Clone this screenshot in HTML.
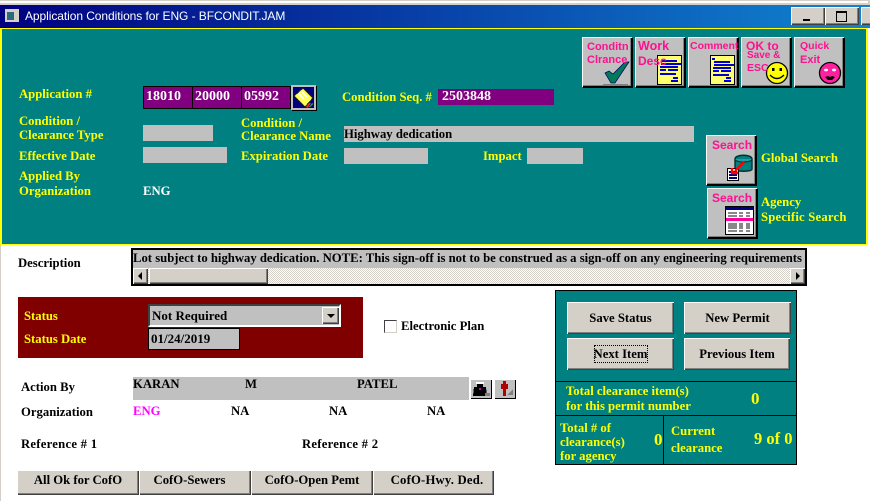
<!DOCTYPE html>
<html><head><meta charset="utf-8">
<style>
html,body{margin:0;padding:0;background:#fff}
#r{position:relative;width:870px;height:501px;overflow:hidden;background:#fff;font:bold 12.7px "Liberation Serif",serif;color:#000}
#r div,#r svg{position:absolute}
.t{white-space:nowrap;line-height:14px}
.y{color:#ff0}
.g{background:#c0c0c0}
.b{box-sizing:border-box;background:#d4d0c8;box-shadow:inset 1px 1px 0 #fff,inset -1px -1px 0 #404040,inset -2px -2px 0 #808080;text-align:center;white-space:nowrap}
.ib{width:50px;height:50px;background:#c0c0c0;box-shadow:inset 1px 1px 0 #fff,inset -1px -1px 0 #000,inset -2px -2px 0 #808080,1px 1px 0 #000}
.m{color:#ff1090;font:bold 12px "Liberation Sans",sans-serif;white-space:nowrap;line-height:12px}
.f{background:#800080;color:#fff;border:1px solid #000;box-sizing:border-box;font-size:14px;line-height:20px;padding-left:2px}
</style></head><body><div id="r">
<!-- chrome -->
<div style="left:0;top:0;width:870px;height:5px;background:#d4d0c8"></div>
<div style="left:0;top:1px;width:870px;height:2px;background:#fff"></div>
<div style="left:0;top:5px;width:870px;height:23px;background:linear-gradient(90deg,#000080,#1084d0)"></div>
<div style="left:5px;top:9px;width:14px;height:13px;background:#d4d0c8"></div>
<div style="left:7px;top:12px;width:7px;height:8px;background:#2a6a80"></div>
<div class="t" style="left:25px;top:9px;color:#fff;font:12px/14px 'Liberation Sans',sans-serif;letter-spacing:-.07px">Application Conditions for ENG - BFCONDIT.JAM</div>
<div class="b" style="left:791px;top:7px;width:34px;height:18px"></div>
<div style="left:803px;top:19px;width:7px;height:2px;background:#000"></div>
<div class="b" style="left:825px;top:7px;width:34px;height:18px"></div>
<div style="left:836px;top:11px;width:9px;height:8px;border:1px solid #000;border-top-width:2px"></div>
<div class="b" style="left:861px;top:7px;width:20px;height:18px"></div>
<div style="left:0;top:245px;width:1px;height:256px;background:#d4d0c8"></div>
<!-- teal -->
<div style="left:0;top:28px;width:868px;height:217px;box-sizing:border-box;background:#008080;border:2px solid #ff0;border-width:1px 2px 1px 2px"></div>
<div style="left:866px;top:28px;width:2px;height:217px;background:#ff0"></div>
<div style="left:868px;top:0;width:2px;height:5px;background:#d4d0c8"></div>

<div class="t y" style="left:19px;top:87px">Application #</div>
<div class="f" style="left:143px;top:86px;width:50px;height:23px">18010</div>
<div class="f" style="left:192px;top:86px;width:50px;height:23px">20000</div>
<div class="f" style="left:241px;top:86px;width:50px;height:23px">05992</div>
<div style="left:291px;top:85px;width:25px;height:25px;background:#000080;box-sizing:border-box;border:2px solid #c0c0c0;box-shadow:1px 1px 0 #000"></div>
<svg style="left:293px;top:87px" width="22" height="22" viewBox="0 0 22 22" shape-rendering="crispEdges"><polygon points="1,9 10,1 20,11 12,20" fill="#ffff50" stroke="#222"/><path d="M6 7l5 5M9 5l5 5" stroke="#fff" stroke-width="2"/><path d="M13 20l3-4h2l-3 5z" fill="#e03020"/><path d="M16 20l3-4 1 1-3 3z" fill="#20a040"/></svg>
<div class="t y" style="left:342px;top:90px">Condition Seq. #</div>
<div style="left:438px;top:89px;width:116px;height:16px;background:#800080;color:#fff;line-height:16px;padding-left:4px;box-sizing:border-box;font-size:14px">2503848</div>

<div class="t y" style="left:19px;top:114px">Condition /</div>
<div class="t y" style="left:19px;top:128px">Clearance Type</div>
<div class="g" style="left:143px;top:125px;width:70px;height:16px"></div>
<div class="t y" style="left:241px;top:116px">Condition /</div>
<div class="t y" style="left:241px;top:129px">Clearance Name</div>
<div class="g t" style="left:344px;top:126px;width:350px;height:16px;line-height:16px">Highway dedication</div>
<div class="t y" style="left:19px;top:149px">Effective Date</div>
<div class="g" style="left:143px;top:147px;width:84px;height:16px"></div>
<div class="t y" style="left:241px;top:149px">Expiration Date</div>
<div class="g" style="left:344px;top:148px;width:84px;height:16px"></div>
<div class="t y" style="left:483px;top:149px">Impact</div>
<div class="g" style="left:527px;top:148px;width:56px;height:16px"></div>
<div class="t y" style="left:19px;top:169px">Applied By</div>
<div class="t y" style="left:19px;top:184px">Organization</div>
<div class="t" style="left:143px;top:184px;color:#fff">ENG</div>

<!-- top icon buttons -->
<div class="ib" style="left:582px;top:37px">
<svg style="left:20px;top:20px" width="28" height="28" viewBox="0 0 28 28"><path d="M1 27.5h25" stroke="#808080" fill="none"/><polygon points="3,16 7,14 11,17 23,5 27,5 13,26 9,26" fill="#007a5a" stroke="#000060" stroke-width=".7"/></svg>
<div class="m" style="left:5px;top:4px;font-size:11px">Conditn</div><div class="m" style="left:5px;top:17px;font-size:11px">Clrance</div></div>
<div class="ib" style="left:635px;top:37px">
<svg style="left:22px;top:18px" width="25" height="30" viewBox="0 0 25 30" shape-rendering="crispEdges"><rect x=".5" y=".5" width="24" height="29" fill="#ffff70" stroke="#000"/><path d="M4 6h16M4 9h20M3 12h18M3 15h6M11 15h10M3 19h16M16 23h5M14 26h7" stroke="#0000d0" stroke-width="2"/></svg>
<div class="m" style="left:3px;top:3px;font-size:12.5px">Work</div><div class="m" style="left:3px;top:18px">Desc</div></div>
<div class="ib" style="left:688px;top:37px">
<svg style="left:22px;top:18px" width="25" height="30" viewBox="0 0 25 30" shape-rendering="crispEdges"><rect x=".5" y=".5" width="24" height="29" fill="#ffff70" stroke="#000"/><path d="M2 4h3M4 7h16M4 10h20M3 13h18M3 16h6M11 16h10M3 20h16M16 23h5M14 26h7" stroke="#0000d0" stroke-width="2"/></svg>
<div class="m" style="left:2px;top:3px;font-size:10.5px">Comment</div></div>
<div class="ib" style="left:741px;top:37px">
<svg style="left:24px;top:24px" width="24" height="24" viewBox="0 0 24 24"><circle cx="12" cy="12" r="10.5" fill="#ff0" stroke="#000" stroke-width="1.3"/><rect x="7" y="7" width="2.5" height="3"/><rect x="14.5" y="7" width="2.5" height="3"/><path d="M5 14q7 7 14 0" fill="none" stroke="#000" stroke-width="1.3"/></svg>
<div class="m" style="left:5px;top:3px">OK to</div><div class="m" style="left:6px;top:13px;font-size:10px">Save &amp;</div><div class="m" style="left:6px;top:25px;font-size:10.5px">ESC</div></div>
<div class="ib" style="left:794px;top:37px">
<svg style="left:24px;top:24px" width="24" height="24" viewBox="0 0 24 24"><circle cx="12" cy="12" r="10.5" fill="#ff20a0" stroke="#000" stroke-width="1.3"/><ellipse cx="8" cy="9" rx="2" ry="1.4" fill="#fff"/><ellipse cx="16" cy="9" rx="2" ry="1.4" fill="#fff"/><path d="M7 16l3-1 2 1 2-1 3 1-3 3h-4z"/></svg>
<div class="m" style="left:6px;top:3px;font-size:10.5px">Quick</div><div class="m" style="left:6px;top:17px;font-size:11px">Exit</div></div>

<!-- search buttons -->
<div class="ib" style="left:706px;top:135px"><div class="m" style="left:6px;top:4px">Search</div>
<svg style="left:20px;top:18px" width="28" height="28" viewBox="0 0 28 28"><path d="M9 6c0-5 17-5 17 0v10c0 3-17 3-17 0z" fill="#008080" stroke="#003030" stroke-width="1.4"/><path d="M9 6c0 4 17 4 17 0" fill="#20a0a0" stroke="#003030"/><rect x="1.5" y="15.5" width="11" height="12" fill="#fff" stroke="#000"/><path d="M3 19h8M3 22h8M3 25h8" stroke="#000080" stroke-width="2"/><path d="M18 9L9 18M6 15v5h6" fill="none" stroke="#f00" stroke-width="2.4"/></svg></div>
<div class="ib" style="left:707px;top:188px"><div class="m" style="left:5px;top:4px">Search</div>
<svg style="left:18px;top:18px" width="29" height="29" viewBox="0 0 29 29" shape-rendering="crispEdges"><rect x=".5" y=".5" width="28" height="28" fill="#fff" stroke="#000"/><rect x="1" y="1" width="27" height="3" fill="#000080"/><path d="M3 7h9M3 10h9M3 18h9M3 20h9M3 22h9M3 25h9M14 7h4M21 7h4M14 10h4M21 10h4M14 18h4M21 18h4M14 20h4M21 20h4M14 22h4M21 22h4M14 25h4M21 25h4" stroke="#111"/><rect x="1" y="12" width="27" height="3" fill="#ff00a0"/></svg></div>
<div class="t y" style="left:761px;top:151px">Global Search</div>
<div class="t y" style="left:761px;top:195px">Agency</div>
<div class="t y" style="left:761px;top:210px;letter-spacing:.2px">Specific Search</div>

<!-- description -->
<div class="t" style="left:18px;top:256px">Description</div>
<div style="left:131px;top:248px;width:676px;height:38px;box-sizing:border-box;border:2px solid #000;background:#c0c0c0"></div>
<div class="t" style="left:133px;top:251px;width:672px;overflow:hidden">Lot subject to highway dedication. NOTE: This sign-off is not to be construed as a sign-off on any engineering requirements</div>
<div style="left:133px;top:268px;width:672px;height:16px;background:repeating-conic-gradient(#d4d0c8 0 25%,#fff 0 50%) 0 0/2px 2px"></div>
<div class="b" style="left:133px;top:268px;width:15px;height:16px"></div>
<div style="left:138px;top:272px;width:0;height:0;border:4px solid transparent;border-right-color:#000;border-left-width:0"></div>
<div class="b" style="left:149px;top:268px;width:119px;height:16px"></div>
<div class="b" style="left:790px;top:268px;width:15px;height:16px"></div>
<div style="left:796px;top:272px;width:0;height:0;border:4px solid transparent;border-left-color:#000;border-right-width:0"></div>

<!-- status -->
<div style="left:18px;top:297px;width:345px;height:61px;background:#800000"></div>
<div class="t y" style="left:24px;top:309px">Status</div>
<div class="t y" style="left:24px;top:332px">Status Date</div>
<div style="left:148px;top:304px;width:193px;height:23px;box-sizing:border-box;background:#c0c0c0;border:2px solid;border-color:#404040 #fff #fff #404040;line-height:20px;padding-left:2px;font-size:13px">Not Required</div>
<div class="b" style="left:322px;top:307px;width:17px;height:17px"></div>
<div style="left:327px;top:314px;width:0;height:0;border:4px solid transparent;border-top-color:#000;border-bottom-width:0"></div>
<div style="left:148px;top:328px;width:92px;height:22px;box-sizing:border-box;background:#c0c0c0;border:1px solid #000;line-height:19px;padding-left:2px;font-size:13px">01/24/2019</div>
<div style="left:384px;top:320px;width:11px;height:11px;background:#fff;border:1px solid;border-color:#404040 #d4d0c8 #d4d0c8 #404040"></div>
<div class="t" style="left:401px;top:319px">Electronic Plan</div>

<!-- action -->
<div class="t" style="left:21px;top:380px">Action By</div>
<div class="g" style="left:133px;top:377px;width:336px;height:23px"></div>
<div class="t" style="left:133px;top:377px">KARAN</div>
<div class="t" style="left:245px;top:377px">M</div>
<div class="t" style="left:357px;top:377px">PATEL</div>
<div class="b" style="left:470px;top:379px;width:22px;height:20px;background:#c0c0c0;box-shadow:inset 1px 1px 0 #fff,inset -1px -1px 0 #000"></div>
<svg style="left:471px;top:380px" width="20" height="18" viewBox="0 0 20 18" shape-rendering="crispEdges"><path d="M5 2h8v2h-1v3h3l1 9H2l1-9h3V4H5z"/><rect x="5" y="2" width="8" height="2" fill="#fff"/><rect x="8" y="8" width="2" height="2" fill="#c000c0"/><path d="M14 13h5v3h-5z" fill="#808080"/></svg>
<div class="b" style="left:494px;top:379px;width:22px;height:20px;background:#c0c0c0;box-shadow:inset 1px 1px 0 #fff,inset -1px -1px 0 #000"></div>
<svg style="left:495px;top:380px" width="20" height="18" viewBox="0 0 20 18" shape-rendering="crispEdges"><path d="M8 1h3v3h2v5h-2v7H8V9H6V4h2z" fill="#b00000"/><path d="M12 15l6-6v6z" fill="#808080"/></svg>
<div class="t" style="left:21px;top:405px">Organization</div>
<div class="t" style="left:133px;top:404px;color:#f0f">ENG</div>
<div class="t" style="left:231px;top:404px">NA</div>
<div class="t" style="left:329px;top:404px">NA</div>
<div class="t" style="left:427px;top:404px">NA</div>
<div class="t" style="left:21px;top:437px;letter-spacing:.25px">Reference # 1</div>
<div class="t" style="left:302px;top:437px;letter-spacing:.25px">Reference # 2</div>

<div class="b" style="left:17px;top:470px;width:122px;height:25px;line-height:21px">All Ok for CofO</div>
<div class="b" style="left:139px;top:470px;width:112px;height:25px;line-height:21px;padding-right:11px">CofO-Sewers</div>
<div class="b" style="left:251px;top:470px;width:122px;height:25px;line-height:21px">CofO-Open Pemt</div>
<div class="b" style="left:373px;top:470px;width:121px;height:25px;line-height:21px;padding-left:7px;letter-spacing:.2px">CofO-Hwy. Ded.</div>

<!-- green panel -->
<div style="left:555px;top:290px;width:242px;height:175px;box-sizing:border-box;background:#008080;border:1px solid #000"></div>
<div class="b" style="left:567px;top:302px;width:107px;height:32px;line-height:32px">Save Status</div>
<div class="b" style="left:684px;top:302px;width:107px;height:32px;line-height:32px">New Permit</div>
<div class="b" style="left:567px;top:338px;width:107px;height:32px;line-height:32px">Next Item</div>
<div style="left:594px;top:345px;width:54px;height:18px;box-sizing:border-box;border:1px dotted #000"></div>
<div class="b" style="left:684px;top:338px;width:106px;height:32px;line-height:32px">Previous Item</div>
<div style="left:555px;top:381px;width:242px;height:1px;background:#000"></div>
<div style="left:555px;top:415px;width:242px;height:1px;background:#000"></div>
<div style="left:663px;top:415px;width:1px;height:50px;background:#000"></div>
<div class="t y" style="left:566px;top:384px">Total clearance item(s)</div>
<div class="t y" style="left:566px;top:399px">for this permit number</div>
<div class="t y" style="left:751px;top:392px;font-size:17px">0</div>
<div class="t y" style="left:560px;top:421px">Total # of</div>
<div class="t y" style="left:560px;top:435px">clearance(s)</div>
<div class="t y" style="left:560px;top:449px">for agency</div>
<div class="t y" style="left:654px;top:433px;font-size:17px">0</div>
<div class="t y" style="left:671px;top:424px">Current</div>
<div class="t y" style="left:671px;top:441px">clearance</div>
<div class="t y" style="left:754px;top:432px;font-size:16.5px">9 of 0</div>
</div></body></html>
